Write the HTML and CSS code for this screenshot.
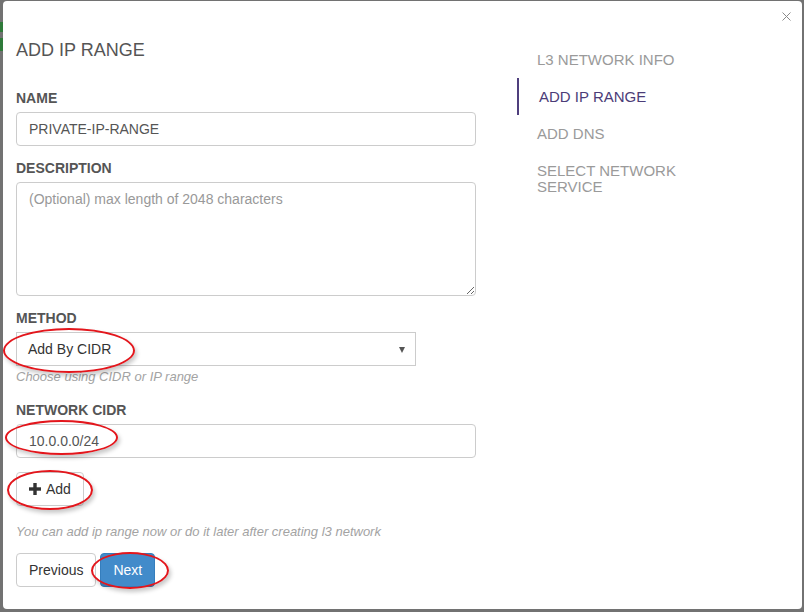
FILE: index.html
```html
<!DOCTYPE html>
<html>
<head>
<meta charset="utf-8">
<link rel="stylesheet" href="styles.css">
</head>
<body>
<div class="modal">
  <svg class="close" width="9" height="9" viewBox="0 0 9 9"><path d="M0.5 0.5L8.5 8.5M8.5 0.5L0.5 8.5" stroke="#8a8a8a" stroke-width="1"/></svg>
  <div class="main">
    <h2 class="title">ADD IP RANGE</h2>
    <div class="fg">
      <label>NAME</label>
      <input class="control" type="text" value="PRIVATE-IP-RANGE">
    </div>
    <div class="fg">
      <label>DESCRIPTION</label>
      <textarea class="control area" placeholder="(Optional) max length of 2048 characters"></textarea>
    </div>
    <div class="fg">
      <label>METHOD</label>
      <div class="mark">
        <div class="select"><span>Add By CIDR</span><span class="caret"></span></div>
        <span class="ring ring-select"></span>
      </div>
      <p class="help help1">Choose using CIDR or IP range</p>
    </div>
    <div class="fg">
      <label>NETWORK CIDR</label>
      <div class="mark">
        <input class="control" type="text" value="10.0.0.0/24">
        <span class="ring ring-cidr"></span>
      </div>
    </div>
    <div class="add-row">
      <div class="mark mark-inline">
        <button class="btn btn-add"><svg width="12" height="12" viewBox="0 0 12 12"><rect x="4.3" y="0" width="3.4" height="12" fill="#333"/><rect x="0" y="4.3" width="12" height="3.4" fill="#333"/></svg>Add</button>
        <span class="ring ring-add"></span>
      </div>
    </div>
    <p class="help help2">You can add ip range now or do it later after creating l3 network</p>
    <div class="actions">
      <button class="btn">Previous</button>
      <div class="mark mark-inline">
        <button class="btn btn-primary">Next</button>
        <span class="ring ring-next"></span>
      </div>
    </div>
  </div>
  <ul class="nav">
    <li>L3 NETWORK INFO</li>
    <li class="active">ADD IP RANGE</li>
    <li>ADD DNS</li>
    <li>SELECT NETWORK SERVICE</li>
  </ul>
</div>
</body>
</html>
```

FILE: styles.css
```css
html, body {
  margin: 0;
  height: 100%;
}
body {
  background: linear-gradient(#2f7a3a, #2f7a3a) 0 22px / 3px 10px no-repeat,
              linear-gradient(#2f7a3a, #2f7a3a) 0 38px / 3px 13px no-repeat,
              #727272;
  padding: 1px 0 0 3px;
  box-sizing: border-box;
  font-family: "Liberation Sans", Arial, sans-serif;
  overflow: hidden;
}
.modal {
  position: relative;
  width: 799px;
  height: 608px;
  background: #fff;
  border-radius: 4px;
  display: flex;
  box-sizing: border-box;
}
.close {
  position: absolute;
  top: 11px;
  right: 11px;
}
.main {
  flex: 0 0 460px;
  margin-left: 13px;
  padding-top: 39px;
}
.title {
  margin: 0 0 28px;
  font-size: 18px;
  line-height: 20px;
  font-weight: normal;
  color: #555;
}
.fg {
  margin-bottom: 12px;
}
label {
  display: block;
  font-size: 14px;
  font-weight: bold;
  line-height: 20px;
  color: #555;
  margin-bottom: 4px;
}
.control {
  display: block;
  width: 100%;
  height: 34px;
  box-sizing: border-box;
  border: 1px solid #ccc;
  border-radius: 4px;
  padding: 6px 12px;
  font-family: "Liberation Sans", Arial, sans-serif;
  font-size: 14px;
  line-height: 20px;
  color: #555;
  background: #fff;
  margin: 0;
  outline: none;
}
.area {
  height: 114px;
  resize: vertical;
}
.area::placeholder {
  color: #999;
}
.mark {
  position: relative;
}
.mark-inline {
  display: inline-block;
}
.select {
  width: 400px;
  height: 34px;
  box-sizing: border-box;
  border: 1px solid #ccc;
  padding: 0 10px 0 11px;
  display: flex;
  align-items: center;
  justify-content: space-between;
  font-size: 14px;
  color: #333;
}
.caret {
  width: 0;
  height: 0;
  border-left: 3.5px solid transparent;
  border-right: 3.5px solid transparent;
  border-top: 6px solid #555;
  margin-top: 1px;
}
.help {
  font-size: 13px;
  line-height: 19px;
  font-style: italic;
  color: #a3a3a3;
}
.help1 {
  margin: 1px 0 0;
  padding-bottom: 2px;
}
.help2 {
  margin: 16px 0 12px;
}
.add-row {
  margin-top: 14px;
}
.btn {
  height: 34px;
  box-sizing: border-box;
  border: 1px solid #ccc;
  border-radius: 4px;
  background: #fff;
  padding: 0 12px;
  font-family: "Liberation Sans", Arial, sans-serif;
  font-size: 14px;
  color: #333;
  margin: 0;
  vertical-align: top;
}
.btn-add {
  display: inline-flex;
  align-items: center;
  gap: 5px;
}
.btn-primary {
  background: #428bca;
  border-color: #357ebd;
  color: #fff;
}
.actions {
  display: flex;
  gap: 4px;
}
.ring {
  position: absolute;
  box-sizing: border-box;
  border: 2px solid #e3161c;
  border-radius: 50%;
  box-shadow: 2px 3px 4px rgba(0, 0, 0, 0.22);
  pointer-events: none;
}
.ring-select {
  left: -13px;
  top: -4px;
  width: 132px;
  height: 45px;
}
.ring-cidr {
  left: -11px;
  top: -4px;
  width: 113px;
  height: 35px;
}
.ring-add {
  left: -9px;
  top: -2px;
  width: 86px;
  height: 40px;
}
.ring-next {
  left: -9px;
  top: -1px;
  width: 78px;
  height: 37px;
}
.nav {
  list-style: none;
  margin: 40px 0 0 41px;
  padding: 0;
  width: 180px;
  align-self: flex-start;
}
.nav li {
  padding: 10.5px 20px;
  font-size: 15px;
  line-height: 16px;
  color: #9a9a9a;
}
.nav li.active {
  border-left: 2px solid #4f3f7d;
  color: #4b3c78;
}
```
